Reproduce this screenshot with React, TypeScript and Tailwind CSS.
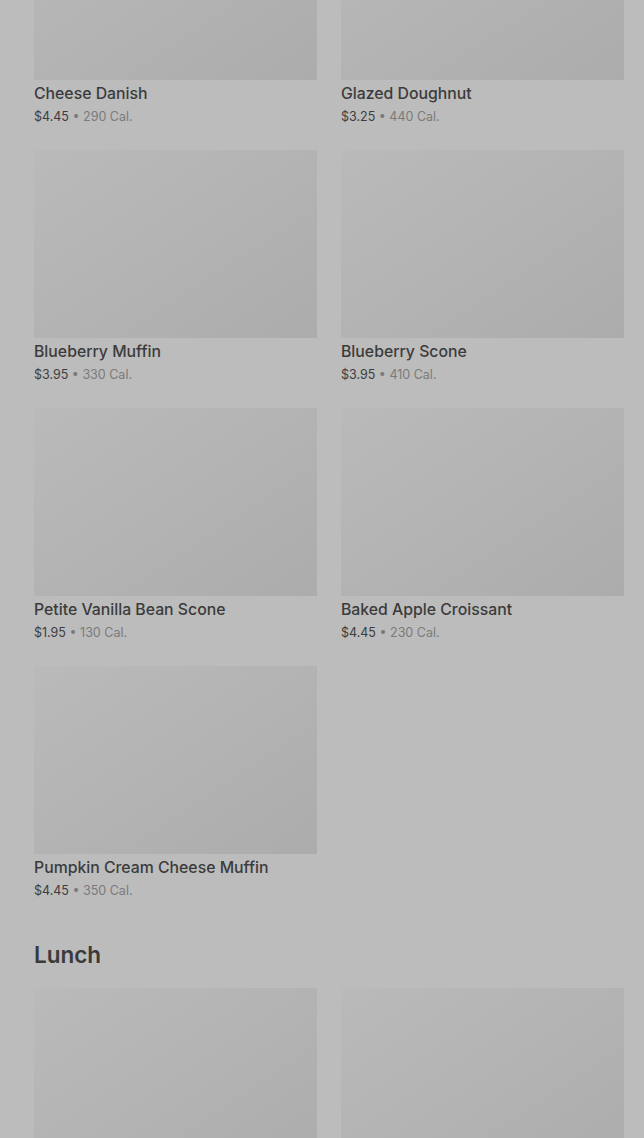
const bakery = [
  { name: "Cheese Danish", price: "$4.45", cal: "290 Cal." },
  { name: "Glazed Doughnut", price: "$3.25", cal: "440 Cal." },
  { name: "Blueberry Muffin", price: "$3.95", cal: "330 Cal." },
  { name: "Blueberry Scone", price: "$3.95", cal: "410 Cal." },
  { name: "Petite Vanilla Bean Scone", price: "$1.95", cal: "130 Cal." },
  { name: "Baked Apple Croissant", price: "$4.45", cal: "230 Cal." },
  { name: "Pumpkin Cream Cheese Muffin", price: "$4.45", cal: "350 Cal." },
];

type Item = { name: string; price: string; cal: string };

const ItemCard = ({ item }: { item: Item }) => (
  <div className="flex flex-col">
    <div className="h-[188px] w-full bg-gradient-to-br from-[#bababa] to-[#acacac]" />
    {item.name && (
      <>
        <div className="mt-1 text-[15.8px] leading-5 text-[#3b3b3b] font-medium">
          {item.name}
        </div>
        <div className="mt-[3px] text-[12.5px] leading-5 text-[#3d3d3d]">
          {item.price}
          <span className="text-[#7a7a7a]"> • {item.cal}</span>
        </div>
      </>
    )}
  </div>
);

export default function App() {
  return (
    <div
      className="h-[1138px] overflow-hidden bg-[#bcbcbc]"
      style={{ fontFamily: "Inter, 'Noto Sans', sans-serif" }}
    >
      <div className="-mt-[108px] pl-[34px] pr-[20px]">
        <div className="grid grid-cols-2 gap-x-6 gap-y-[23px]">
          {bakery.map((item) => (
            <ItemCard key={item.name} item={item} />
          ))}
        </div>

        <h2 className="mt-[36px] mb-[15px] text-[22.5px] leading-9 font-semibold text-[#3a3a3a]">
          Lunch
        </h2>

        <div className="grid grid-cols-2 gap-x-6 gap-y-6">
          <ItemCard item={{ name: "", price: "", cal: "" }} />
          <ItemCard item={{ name: "", price: "", cal: "" }} />
        </div>
      </div>
    </div>
  );
}
